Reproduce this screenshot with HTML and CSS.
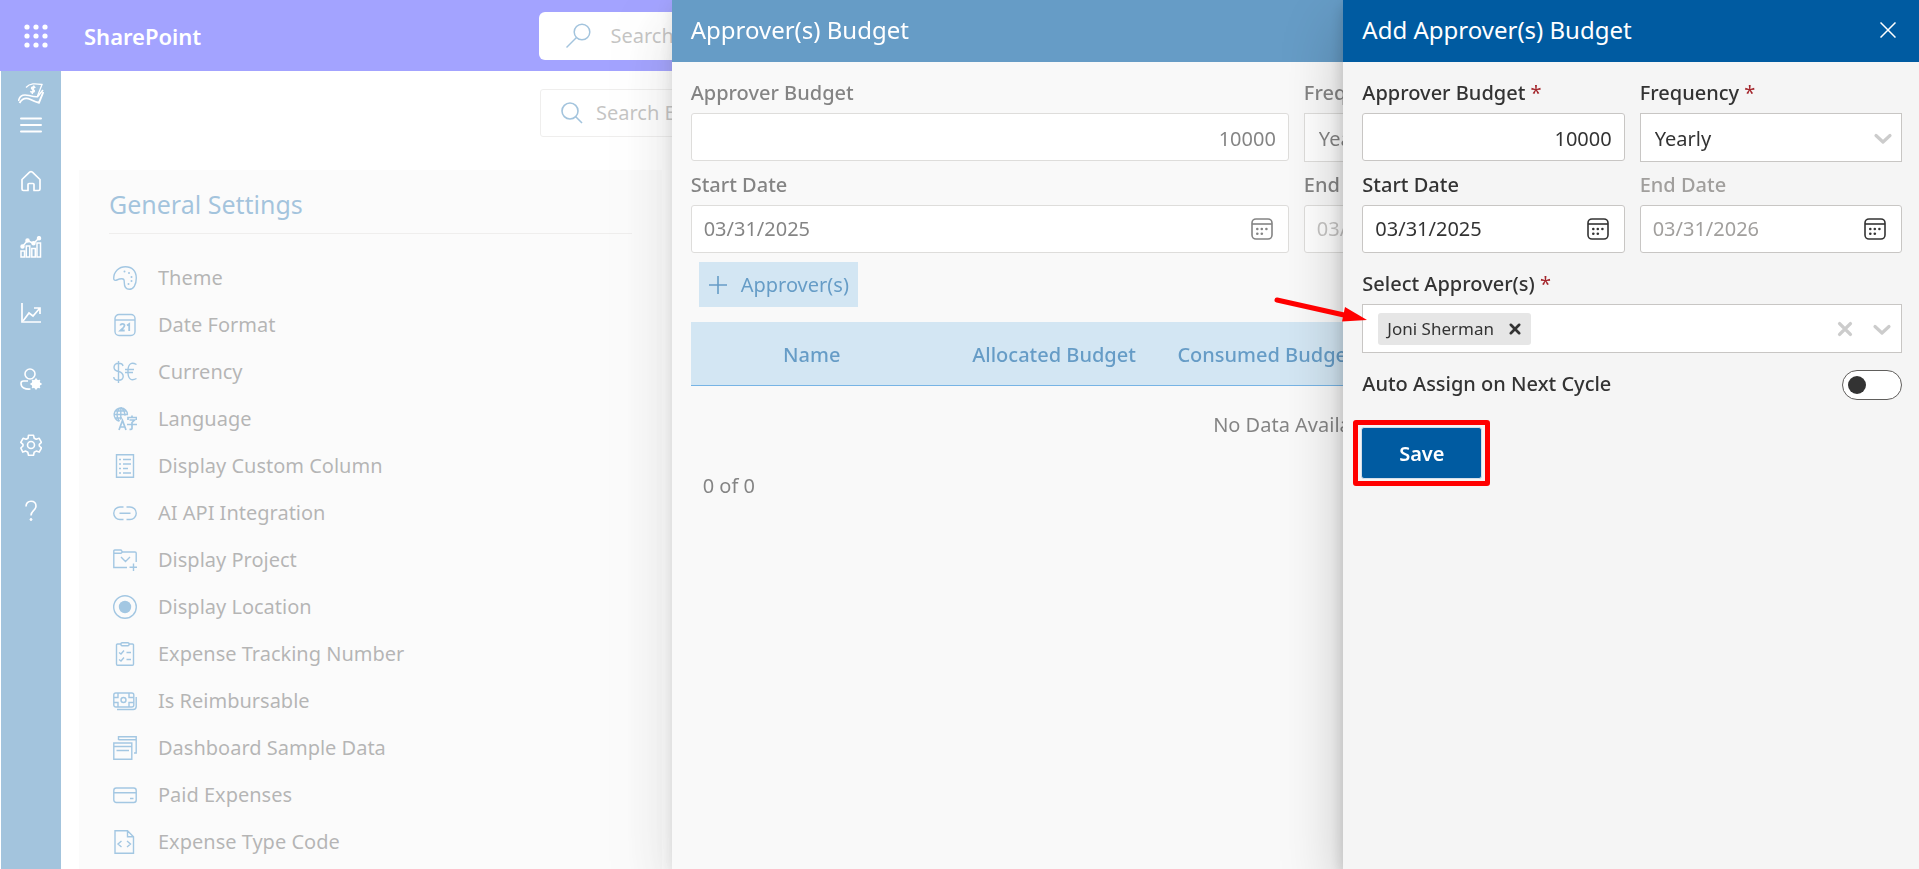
FILE: index.html
```html
<!DOCTYPE html>
<html lang="en">
<head>
<meta charset="utf-8">
<title>Approver(s) Budget</title>
<link rel="stylesheet" href="styles.css">
</head>
<body>
<svg class="sprite" aria-hidden="true">
  <symbol id="calendar" viewBox="0 0 22 22"><g fill="none" stroke="currentColor" stroke-width="1.6"><rect x="1" y="1" width="20" height="20" rx="4"/><path d="M1 6h20"/></g><g fill="currentColor"><circle cx="6.3" cy="11" r="1.3"/><circle cx="10.8" cy="11" r="1.3"/><circle cx="15.4" cy="11" r="1.3"/><circle cx="6.3" cy="15.7" r="1.3"/><circle cx="10.8" cy="15.7" r="1.3"/></g></symbol>
  <symbol id="chevron" viewBox="0 0 20 20"><path d="M3 7.5l7 6.5 7-6.5" fill="none" stroke="currentColor" stroke-width="3.2" stroke-linecap="round" stroke-linejoin="round"/></symbol>
  <symbol id="cross" viewBox="0 0 20 20"><path d="M4 4l12 12M16 4L4 16" fill="none" stroke="currentColor" stroke-width="3.8" stroke-linecap="round"/></symbol>
</svg>

<div class="page">
  <header class="topbar">
    <div class="brand">
      <button class="plain" aria-label="App launcher">
        <svg width="24" height="24" viewBox="0 0 24 24" fill="currentColor"><circle cx="3" cy="3" r="2.6"/><circle cx="12" cy="3" r="2.6"/><circle cx="21" cy="3" r="2.6"/><circle cx="3" cy="12" r="2.6"/><circle cx="12" cy="12" r="2.6"/><circle cx="21" cy="12" r="2.6"/><circle cx="3" cy="21" r="2.6"/><circle cx="12" cy="21" r="2.6"/><circle cx="21" cy="21" r="2.6"/></svg>
      </button>
      <a class="brand-name" href="#">SharePoint</a>
    </div>
    <div class="suite-search">
      <svg width="26" height="26" viewBox="0 0 26 26" fill="none" stroke="currentColor" stroke-width="1.5"><circle cx="17" cy="9" r="7.8"/><path d="M11.5 14.5L1.5 24.5"/></svg>
      <input type="text" placeholder="Search" aria-label="Search this site">
    </div>
  </header>

  <div class="workspace">
    <nav class="rail" aria-label="Main">
      <div class="rail-head">
        <svg width="26" height="22" viewBox="0 0 26 22" fill="none" stroke="currentColor"><path d="M8 4.500C12 0 17 .5 24 1.500L19.500 13" stroke-width="1.300"/><path d="M.5 18C2 11 7 11.500 11 12.500s6 1.500 8.500 1.200L25 7" stroke-width="1.600"/><path d="M1.500 20c3-5 7-5.500 11-3.500 3 1.500 5 2.500 8.500 3.200L25.300 9" stroke-width="1.900"/><path d="M17.300 4.800c-1-1.300-3.600-1-3.800.3s3.200 1.600 2.900 3-3 1.500-4 .2M16 2.500l-1.800 8.500" stroke-width="1.500"/></svg>
        <button class="plain" aria-label="Toggle menu"><svg width="22" height="16" viewBox="0 0 22 16" stroke="currentColor" stroke-width="2" stroke-linecap="round"><path d="M1 1.500h20M1 8h20M1 14.500h20"/></svg></button>
      </div>
      <a href="#" aria-label="Home"><svg width="22" height="22" viewBox="0 0 22 22" fill="none" stroke="currentColor" stroke-width="1.700" stroke-linejoin="round"><path d="M2 9.500L9.600 2.200q1.400-1.200 2.800 0L20 9.500V19q0 1.500-1.500 1.500H14V14.500q0-1-1-1H9q-1 0-1 1V20.500H3.500Q2 20.500 2 19z"/></svg></a>
      <a href="#" aria-label="Dashboard"><svg width="22" height="22" viewBox="0 0 22 22" fill="none" stroke="currentColor" stroke-width="1.500"><path d="M1 15h3.500v6H1zM6.300 10h3.500v11H6.300zM11.800 12.500h3.500V21h-3.500zM17 7h3.500v14H17z"/><path d="M2.500 10.500l5-6 6 3 5.500-5.500"/><g fill="currentColor"><circle cx="2.500" cy="10.500" r="1.500"/><circle cx="7.500" cy="4.500" r="1.500"/><circle cx="13.500" cy="7.300" r="1.500"/><circle cx="19" cy="2.200" r="1.500"/></g></svg></a>
      <a href="#" aria-label="Reports"><svg width="22" height="22" viewBox="0 0 22 22" fill="none" stroke="currentColor" stroke-width="1.700"><path d="M2 1v19h19"/><path d="M3 19L9 11l4 3 7-8M14 6h6v6"/></svg></a>
      <a href="#" aria-label="Manage users"><svg width="22" height="22" viewBox="0 0 22 22" fill="none" stroke="currentColor" stroke-width="1.600"><circle cx="10" cy="6" r="5"/><path d="M8 13H3.500Q1 13 1 15.500c0 4 4 6 9.500 5.500"/><circle cx="16" cy="16" r="3" stroke-width="3"/><path d="M16 10.500v11M10.500 16h11M12.200 12.200l7.600 7.600M19.800 12.200l-7.600 7.600" stroke-width="1.800"/></svg></a>
      <a href="#" aria-label="Settings"><svg width="22" height="22" viewBox="0 0 22 22" fill="none" stroke="currentColor" stroke-width="1.600" stroke-linejoin="round"><circle cx="11" cy="11" r="3.500"/><path d="M8.500 1.200h5l.7 3 2 1.100 3-1 2.300 4.100-2.200 2v1.600l2.200 2-2.300 4.100-3-1-2 1.100-.7 3h-5l-.7-3-2-1.100-3 1L.8 14l2.200-2v-1.600l-2.200-2 2.300-4.100 3 1 2-1.100z"/></svg></a>
      <a href="#" aria-label="Help"><svg width="22" height="22" viewBox="0 0 22 22" fill="none" stroke="currentColor" stroke-width="1.600"><path d="M6 6.500c0-3.300 2-5.300 5-5.300s5 2 5 5c0 4-5 4.500-5 9.300"/><circle cx="11" cy="19.500" r="1" fill="currentColor" stroke-width="1"/></svg></a>
    </nav>

    <main class="main">
      <div class="settings-search">
        <svg width="22" height="22" viewBox="0 0 22 22" fill="none" stroke="currentColor" stroke-width="1.600"><circle cx="9" cy="9" r="8"/><path d="M14.500 14.500L21 21"/></svg>
        <input type="text" placeholder="Search Expense Settings" aria-label="Search settings">
      </div>
      <div class="cards">
        <section class="card">
          <h2>General Settings</h2>
          <ul class="settings">
            <li><a href="#"><svg viewBox="0 0 24 24"><path d="M.7 12.500C.7 5.500 6 .7 12.500.7S23.300 5 23.300 12s-3 11.300-7 11.300-5-3-5-6.500-.5-4-2.500-4-3.500.5-5 1.200S.7 14.300.7 12.500z"/><g class="solid"><circle cx="11.500" cy="5.500" r="1"/><circle cx="16" cy="7" r="1"/><circle cx="18.500" cy="11" r="1"/><circle cx="18.500" cy="15" r="1"/><circle cx="15.500" cy="18" r="1"/></g></svg>Theme</a></li>
            <li><a href="#"><svg viewBox="0 0 24 24"><rect x="2" y="1.500" width="20" height="21" rx="4"/><path d="M2 7h20"/><path stroke-width="1.800" d="M7.500 12.500q0-1.700 2-1.700t2 1.700q0 1.500-4 5h4.200M14 12.500l2.200-1.500v7"/></svg>Date Format</a></li>
            <li><a href="#"><svg viewBox="0 0 24 24"><path d="M10 6Q9.500 3.300 5.500 3.300T1 7.200q0 3.300 4.500 4.300t4.700 4.800q0 4-4.700 4T.8 17M5.500 1v22M23.500 4.500Q16 .5 15 9.500v4q1 9 8.500 5M12 9.500h9M12 12.500h8"/></svg>Currency</a></li>
            <li><a href="#"><svg viewBox="0 0 24 24"><path d="M14.500 7.500a6.700 6.700 0 1 0-8 6.800M1 7.500h14M7.800.8v12M7.500.8c-5 4-4 10-1 13.500M8 .8q4 3 4 8M2 4h11.500M2 11h7"/><path stroke-width="1.700" d="M6 23l3.500-9.500L13 23M7.200 20h4.500M15 13V10.500h8.500V13M19 8.500v2M16.500 13h5L19 15.500v6q0 1-2.500.8M14 17.500h10"/></svg>Language</a></li>
            <li><a href="#"><svg viewBox="0 0 24 24"><path d="M3.500.8h17v22.400h-17z"/><path d="M10 5.500h8M10 10h8M10 14.500h5M10 19h8M6 5.500h2M6 10h2M6 14.500h2M6 19h2"/></svg>Display Custom Column</a></li>
            <li><a href="#"><svg viewBox="0 0 24 24"><path d="M10.500 6H7a6.200 6.200 0 0 0 0 12.500h3.500M13.500 6H17a6.200 6.200 0 0 1 0 12.500h-3.500M6.500 12.300h11"/></svg>AI API Integration</a></li>
            <li><a href="#"><svg viewBox="0 0 24 24"><path d="M14 19.500H.8V3q0-1 1-1H8l1.500 2H22q1.200 0 1.200 1V14M.8 5.300H8L9.500 4M8 9l4.500 4.500L17 9M20.500 15.500V23M16.500 19.300h7.500"/></svg>Display Project</a></li>
            <li><a href="#"><svg viewBox="0 0 24 24"><circle cx="12" cy="12" r="11.300"/><circle class="solid" cx="12" cy="12" r="6.200"/></svg>Display Location</a></li>
            <li><a href="#"><svg viewBox="0 0 24 24"><path d="M8 2H4.500Q3.500 2 3.500 3v19q0 1.200 1 1.200h15q1 0 1-1V3q0-1-1-1H16"/><rect x="8" y=".8" width="8" height="3" rx="1"/><path d="M6 10.500l2 1.500 3-3.500M13.500 10.500H18M6 17.500l2 1.500 3-3.500M13.500 17.500H18"/></svg>Expense Tracking Number</a></li>
            <li><a href="#"><svg viewBox="0 0 24 24"><rect x=".8" y="4" width="20" height="14" rx="2"/><circle cx="10.500" cy="11" r="2.500"/><path d="M1 8.500h4V4M16 4v4.500h4.500M1 13.500h4V18M16 18v-4.500h4.500M23.200 8v9.500q0 3-3 3H4"/></svg>Is Reimbursable</a></li>
            <li><a href="#"><svg viewBox="0 0 24 24"><path d="M.8 7h18v16.200H.8zM.8 10.500h18M3.500 14.500H16M5.500 4V.8h17.700V17H21M5.500 3.700h17.700"/></svg>Dashboard Sample Data</a></li>
            <li><a href="#"><svg viewBox="0 0 24 24"><rect x=".8" y="5" width="22.400" height="14.500" rx="2.500"/><path d="M.8 9.800h22.400M17 15.500h3.500"/></svg>Paid Expenses</a></li>
            <li><a href="#"><svg viewBox="0 0 24 24"><path d="M2 .8h12.500l6 6v16.400H2zM14.500.8v6h6M8.500 11L5 14l3.500 3M14 11l3.500 3-3.500 3"/></svg>Expense Type Code</a></li>
          </ul>
        </section>
      </div>
    </main>
  </div>
</div>
<div class="veil"></div>

<section class="panel panel-budget" aria-labelledby="budget-title">
  <header class="panel-head"><h1 id="budget-title">Approver(s) Budget</h1></header>
  <div class="panel-body">
    <div class="fields">
      <div class="field">
        <label for="b-amount">Approver Budget</label>
        <input class="box amount" id="b-amount" type="text" value="10000">
      </div>
      <div class="field">
        <label for="b-freq">Frequency</label>
        <div class="pick"><select class="box" id="b-freq"><option>Yearly</option></select><svg width="20" height="20"><use href="#chevron"/></svg></div>
      </div>
      <div class="field">
        <label for="b-start">Start Date</label>
        <div class="box date"><input id="b-start" type="text" value="03/31/2025"><button class="plain" aria-label="Choose start date"><svg width="22" height="22"><use href="#calendar"/></svg></button></div>
      </div>
      <div class="field">
        <label for="b-end">End Date</label>
        <div class="box date muted"><input id="b-end" type="text" value="03/31/2026"></div>
      </div>
    </div>
    <button class="add"><svg width="18" height="18" viewBox="0 0 18 18" stroke="currentColor" stroke-width="1.600"><path d="M9 0v18M0 9h18"/></svg>Approver(s)</button>
    <table class="grid">
      <colgroup><col class="c-wide"><col class="c-wide"><col class="c-mid"><col></colgroup>
      <thead><tr><th scope="col">Name</th><th scope="col">Allocated Budget</th><th scope="col">Consumed Budget</th><td></td></tr></thead>
      <tbody><tr><td colspan="4">No Data Available</td></tr></tbody>
    </table>
    <p class="count">0 of 0</p>
  </div>
</section>
<div class="veil"></div>

<section class="panel panel-add" aria-labelledby="add-title">
  <header class="panel-head">
    <h1 id="add-title">Add Approver(s) Budget</h1>
    <button class="plain" aria-label="Close"><svg width="16" height="16" viewBox="0 0 16 16" stroke="currentColor" stroke-width="1.500"><path d="M.5.5l15 15M15.500.5l-15 15"/></svg></button>
  </header>
  <form class="panel-body">
    <div class="fields">
      <div class="field">
        <label for="a-amount">Approver Budget <span class="req">*</span></label>
        <input class="box amount" id="a-amount" type="text" value="10000">
      </div>
      <div class="field">
        <label for="a-freq">Frequency <span class="req">*</span></label>
        <div class="pick"><select class="box" id="a-freq"><option>Yearly</option></select><svg width="20" height="20"><use href="#chevron"/></svg></div>
      </div>
      <div class="field">
        <label for="a-start">Start Date</label>
        <div class="box date"><input id="a-start" type="text" value="03/31/2025"><button type="button" class="plain" aria-label="Choose start date"><svg width="22" height="22"><use href="#calendar"/></svg></button></div>
      </div>
      <div class="field">
        <label class="dim" for="a-end">End Date</label>
        <div class="box date muted"><input id="a-end" type="text" value="03/31/2026" readonly><button type="button" class="plain" aria-label="Choose end date"><svg width="22" height="22"><use href="#calendar"/></svg></button></div>
      </div>
    </div>
    <div class="field approvers">
      <label for="a-people">Select Approver(s) <span class="req">*</span></label>
      <div class="box people">
        <span class="chip">Joni Sherman<button type="button" class="plain" aria-label="Remove Joni Sherman"><svg width="14" height="14"><use href="#cross"/></svg></button></span>
        <input id="a-people" type="text" role="combobox" aria-expanded="false">
        <button type="button" class="plain" aria-label="Clear all"><svg width="18" height="18"><use href="#cross"/></svg></button>
        <button type="button" class="plain" aria-label="Open list"><svg width="20" height="20"><use href="#chevron"/></svg></button>
      </div>
      <svg class="pointer" width="94" height="28" viewBox="0 0 94 28"><path d="M4 5L71 20" stroke="currentColor" stroke-width="5" stroke-linecap="round"/><path d="M72 12L94 25L69 26.500z" fill="currentColor"/></svg>
    </div>
    <div class="toggle-row">
      <label for="a-auto">Auto Assign on Next Cycle</label>
      <input class="toggle" id="a-auto" type="checkbox" role="switch">
    </div>
    <div class="save-wrap"><button type="button" class="save">Save</button></div>
  </form>
</section>
</body>
</html>
```
FILE: styles.css
```css
:root {
  --brand: #005ba1;
  --ink: #333333;
  --line: #c8c6c4;
}

* { box-sizing: border-box; }

body {
  margin: 0;
  height: 100vh;
  overflow: hidden;
  background: #ffffff;
  color: var(--ink);
  font-family: "Noto Sans", "Open Sans", sans-serif;
  font-size: 20px;
  line-height: 28px;
}

h1, h2, p, ul { margin: 0; padding: 0; font-weight: 400; }
ul { list-style: none; }
a { color: inherit; text-decoration: none; }
svg { display: block; flex: none; }
input, button, select { font: inherit; color: inherit; }
input { min-width: 0; }
.sprite { position: absolute; width: 0; height: 0; }

.plain {
  display: flex;
  padding: 0;
  border: 0;
  background: none;
  color: inherit;
}

/* Base page */
.page {
  display: flex;
  flex-direction: column;
  height: 100vh;
  overflow: hidden;
}

.topbar {
  display: grid;
  grid-template-columns: 1fr minmax(0, 842px) 1fr;
  align-items: center;
  flex: none;
  height: 71px;
  background: #0000ff;
}

.brand {
  display: flex;
  align-items: center;
  gap: 36px;
  padding-left: 24px;
  color: #ffffff;
}

.brand-name {
  font-size: 22px;
  font-weight: 600;
}

.suite-search {
  display: flex;
  align-items: center;
  gap: 20px;
  height: 48px;
  padding-left: 26px;
  border-radius: 6px;
  background: #ffffff;
  color: var(--brand);
}

.suite-search input,
.settings-search input {
  flex: 1;
  padding: 0;
  border: 0;
  background: none;
}

input::placeholder { color: #605e5c; opacity: 1; }

.workspace { display: flex; flex: 1; min-height: 0; }

.rail {
  display: flex;
  flex-direction: column;
  align-items: center;
  flex: none;
  gap: 44px;
  width: 60px;
  margin-left: 1px;
  padding-top: 12px;
  background: var(--brand);
  color: #ffffff;
}

.rail-head {
  display: flex;
  flex-direction: column;
  align-items: center;
  gap: 12px;
  margin-bottom: -7px;
}

.main { flex: 1; padding: 18px 18px 0; }

.settings-search {
  display: flex;
  align-items: center;
  gap: 13px;
  width: 842px;
  height: 48px;
  margin: 0 0 33px 461px;
  padding-left: 20px;
  border: 1px solid #d2d0ce;
  border-radius: 3px;
  color: var(--brand);
}

.cards {
  display: grid;
  grid-template-columns: repeat(3, 1fr);
  gap: 36px;
}

.card {
  padding: 17px 30px;
  background: #f4f4f4;
}

.card h2 {
  padding: 0 0 12px;
  border-bottom: 1px solid #d2d0ce;
  color: var(--brand);
  font-size: 25px;
  line-height: 34px;
}

.settings { padding-top: 20px; }

.settings a {
  display: flex;
  align-items: center;
  gap: 21px;
  height: 47px;
  padding-left: 4px;
}

.settings svg {
  width: 24px;
  height: 24px;
  fill: none;
  stroke: #0064b0;
  stroke-width: 1.4;
}

.settings .solid { fill: #0064b0; stroke: none; }

/* Panels slide over the page from the right */
.veil {
  position: fixed;
  inset: 0;
  background: rgba(255, 255, 255, 0.4);
}

.panel {
  position: fixed;
  top: 0;
  right: 0;
  bottom: 0;
  background: #f5f5f5;
  box-shadow: 0 26px 58px rgba(0, 0, 0, 0.22), 0 5px 14px rgba(0, 0, 0, 0.18);
}

.panel-budget { width: 65%; }
.panel-add { width: 30%; }

.panel-head {
  display: flex;
  align-items: center;
  justify-content: space-between;
  height: 62px;
  padding: 0 23px 2px 19px;
  background: var(--brand);
  color: #ffffff;
}

.panel-head h1 { font-size: 24px; line-height: 34px; }

.panel-body { padding: 17px 17px 0 19px; }

.fields {
  display: grid;
  grid-template-columns: minmax(0, 1fr) minmax(0, 1fr);
  gap: 9px 15px;
}

.field { display: flex; flex-direction: column; gap: 6px; }

label { font-weight: 500; }
.dim { color: #a19f9d; }
.req { color: #a4262c; font-weight: 400; }

.box {
  width: 100%;
  height: 48px;
  border: 1px solid var(--line);
  border-radius: 3px;
  background: #ffffff;
}

.amount { padding: 2px 12px 0; text-align: right; }

.pick { display: grid; align-items: center; }
.pick > * { grid-area: 1 / 1; }
.pick svg {
  justify-self: end;
  margin-right: 9px;
  color: #cccccc;
  pointer-events: none;
}
.pick .box {
  height: 49px;
  padding: 2px 14px 0;
  border-radius: 0;
  appearance: none;
}

.date {
  display: flex;
  align-items: center;
  padding: 0 15px 0 12px;
}

.date input {
  flex: 1;
  padding: 0;
  border: 0;
  background: none;
}

.muted input { color: #a19f9d; }

.add {
  display: flex;
  align-items: center;
  gap: 14px;
  height: 45px;
  margin: 9px 0 15px 8px;
  padding: 0 9px 0 10px;
  border: 0;
  background: #b6d6ec;
  color: var(--brand);
}

.grid {
  width: 100%;
  border-collapse: collapse;
  table-layout: fixed;
  text-align: center;
}

.c-wide { width: 20%; }
.c-mid { width: 15%; }

.grid th, .grid td { padding: 0; white-space: nowrap; }

.grid thead tr {
  height: 63px;
  border-bottom: 1px solid #1d83d4;
  background: #b6d6ec;
  color: var(--brand);
}

.grid th { padding-top: 3px; font-weight: 500; }
.grid tbody td { padding: 25px 0; }
.count { padding: 8px 12px; }

/* Add form */
.approvers { position: relative; margin-top: 17px; }

.people {
  display: flex;
  align-items: center;
  gap: 18px;
  height: 49px;
  padding: 0 9px 0 15px;
  border-radius: 0;
  color: #cccccc;
}

.people > input {
  flex: 1;
  padding: 0;
  border: 0;
}

.chip {
  display: flex;
  align-items: center;
  gap: 14px;
  height: 32px;
  padding: 0 9px;
  border-radius: 3px;
  background: #e6e6e6;
  color: var(--ink);
  font-size: 17px;
}

.pointer {
  position: absolute;
  top: 25px;
  left: -89px;
  color: #ff0000;
}

.toggle-row {
  display: flex;
  align-items: flex-start;
  justify-content: space-between;
  margin-top: 17px;
}

.toggle {
  display: flex;
  align-items: center;
  width: 60px;
  height: 30px;
  margin: 0;
  padding: 0 5px;
  border: 1px solid #605e5c;
  border-radius: 15px;
  background: #ffffff;
  appearance: none;
}

.toggle::before {
  content: "";
  width: 18px;
  height: 18px;
  border-radius: 50%;
  background: #333333;
}

.save-wrap {
  width: fit-content;
  margin: 20px 0 0 -9px;
  padding: 2px 3px;
  border: 5px solid #ff0000;
  border-radius: 3px;
}

.save {
  display: block;
  width: 121px;
  height: 52px;
  padding: 2px 0 0;
  border: 1px solid #d5dfea;
  border-radius: 3px;
  background: var(--brand);
  color: #ffffff;
  font-weight: 600;
}
```
